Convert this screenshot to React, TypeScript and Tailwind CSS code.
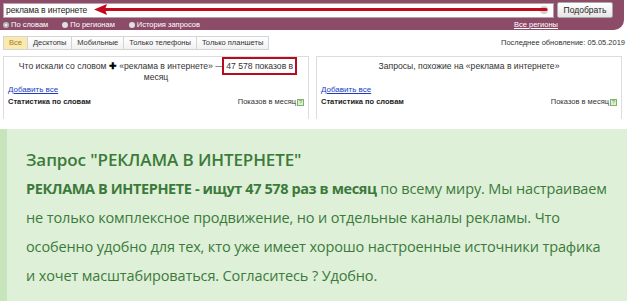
import { FiX } from 'react-icons/fi'

const radios = [
  { name: 'По словам', active: true },
  { name: 'По регионам', active: false },
  { name: 'История запросов', active: false },
]

const tabs = ['Все', 'Десктопы', 'Мобильные', 'Только телефоны', 'Только планшеты']

const StatsHeader = () => (
  <div className="flex items-center justify-between mt-[3px] px-[4px] h-[8px] text-[7.5px] leading-none font-bold text-[#222]">
    <span>Статистика по словам</span>
    <span className="flex items-center gap-[1px] font-normal text-[#333]">
      Показов в месяц
      <span className="w-[7px] h-[7px] border border-[#7bb36b] bg-[#dff0d0] text-[6px] leading-[5px] text-center text-[#5a9a4a]">?</span>
    </span>
  </div>
)

const App = () => {
  return (
    <div className="w-[627px] h-[301px] bg-white overflow-hidden" style={{ fontFamily: '"Liberation Sans", Arial, sans-serif' }}>
      {/* Wordstat screenshot */}
      <div className="h-[119px] overflow-hidden">
        <div className="relative w-[624px] h-[30px] bg-[#8c4c68] rounded-br-[10px] px-[3px] pt-[2px]">
          <div className="flex items-center gap-[3px]">
            <div className="flex-1 h-[15px] bg-white border border-[#b9a0ab] flex items-center justify-between px-[2px]">
              <span className="text-[8.5px] tracking-[-0.1px] text-[#222] leading-none">реклама в интернете</span>
              <span className="w-[8px] h-[8px] rounded-full bg-[#cfcfcf] flex items-center justify-center mr-[3px]">
                <FiX className="w-[6px] h-[6px] text-white" />
              </span>
            </div>
            <button className="w-[56px] h-[16px] bg-gradient-to-b from-white to-[#e6e6e6] border border-[#a9a9a9] rounded-[2px] text-[8.5px] text-[#222] leading-none mr-[8px]">
              Подобрать
            </button>
          </div>
          <div className="flex items-center mt-[3px] text-[7.5px] text-white leading-none">
            {radios.map((r) => (
              <span key={r.name} className="flex items-center gap-[2px] mr-[14px]">
                <span className={`w-[6px] h-[6px] rounded-full ${r.active ? 'bg-white border-[2px] border-[#bbb]' : 'bg-[#e0e0e0]'}`} />
                {r.name}
              </span>
            ))}
            <span className="ml-[300px] underline">Все регионы</span>
          </div>
          {/* annotation arrow */}
          <svg className="absolute left-[94px] top-[4px]" width="454" height="11" viewBox="0 0 454 11">
            <line x1="8" y1="5.5" x2="452" y2="5.5" stroke="#c5081c" strokeWidth="3" strokeLinecap="round" />
            <polygon points="0,5.5 13,0 11,5.5 13,11" fill="#c5081c" />
          </svg>
        </div>

        <div className="flex items-center justify-between mt-[6px] pl-[3px] pr-[2px]">
          <div className="flex text-[7.5px] leading-none">
            {tabs.map((t, i) => (
              <span
                key={t}
                className={`h-[14px] px-[5px] flex items-center border border-[#d4d4d4] -ml-px first:ml-0 ${
                  i === 0 ? 'bg-[#fbeab0] text-[#9a7b2c]' : 'bg-gradient-to-b from-white to-[#f1f1f1] text-[#333]'
                }`}
              >
                {t}
              </span>
            ))}
          </div>
          <span className="text-[7.5px] text-[#333]">Последнее обновление: 05.05.2019</span>
        </div>

        <div className="flex gap-[7px] mt-[6px] pl-[3px] pr-[5px]">
          <div className="flex-1 border border-[#dcdcdc] border-b-0 h-[70px] pt-[4px]">
            <p className="text-[8.6px] text-[#333] text-center leading-[11px] px-[14px]">
              Что искали со словом <span className="font-bold text-black">✚</span> «реклама в интернете» —{' '}
              <span className="outline-[2px] outline outline-offset-[2px] outline-[#b50d1f]">47 578 показов в</span> месяц
            </p>
            <a className="block h-[10px] mt-[2px] ml-[4px] text-[8px] leading-[10px] text-[#1a3dc1] underline">Добавить все</a>
            <StatsHeader />
          </div>
          <div className="flex-1 border border-[#dcdcdc] border-b-0 h-[70px] pt-[4px]">
            <p className="text-[8.6px] text-[#333] text-center leading-[11px]">
              Запросы, похожие на «реклама в интернете»
            </p>
            <a className="block h-[10px] mt-[13px] ml-[4px] text-[8px] leading-[10px] text-[#1a3dc1] underline">Добавить все</a>
            <StatsHeader />
          </div>
        </div>
      </div>

      {/* Green note */}
      <div
        className="mt-[10px] h-[172px] bg-[#dff0d8] border-l-[7px] border-[#c7e5ba] pl-[19px] pt-[19px] text-[#3b7a3b]"
        style={{ fontFamily: '"Open Sans", "Noto Sans", sans-serif' }}
      >
        <h2 className="text-[17px] font-semibold leading-[24px] tracking-[-0.1px]">Запрос "РЕКЛАМА В ИНТЕРНЕТЕ"</h2>
        <p className="mt-[2px] text-[14.5px] leading-[29px] w-[585px] tracking-[-0.13px]">
          <b className="tracking-[-0.4px]">РЕКЛАМА В ИНТЕРНЕТЕ - ищут 47 578 раз в месяц</b> по всему миру. Мы настраиваем не только комплексное
          продвижение, но и отдельные каналы рекламы. Что особенно удобно для тех, кто уже имеет хорошо настроенные
          источники трафика и хочет масштабироваться. Согласитесь ? Удобно.
        </p>
      </div>
    </div>
  )
}

export default App
